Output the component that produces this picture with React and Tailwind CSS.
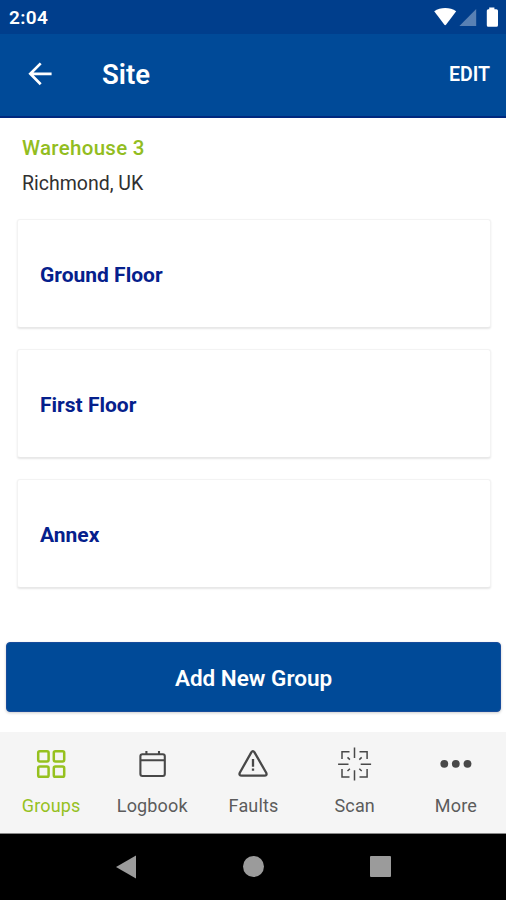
import React from 'react';

const groups = ['Ground Floor', 'First Floor', 'Annex'];

const GroupsIcon = () => (
  <svg className="h-9 w-9" viewBox="0 0 36 36" fill="none" stroke="currentColor" strokeWidth="2.5">
    <rect x="5.2" y="5.2" width="10.4" height="10.2" rx="1.6" />
    <rect x="20.8" y="5.2" width="10.4" height="10.2" rx="1.6" />
    <rect x="5.2" y="20.6" width="10.4" height="10.2" rx="1.6" />
    <rect x="20.8" y="20.6" width="10.4" height="10.2" rx="1.6" />
  </svg>
);

const LogbookIcon = () => (
  <svg className="h-9 w-9" viewBox="0 0 36 36" fill="none" stroke="currentColor" strokeWidth="2.1">
    <rect x="6.4" y="8.2" width="24.4" height="21.8" rx="2" />
    <path d="M6.4 14.2H30.8M12.4 5V8M25 5V8" />
  </svg>
);

const FaultsIcon = () => (
  <svg className="h-9 w-9" viewBox="0 0 36 36" fill="none" stroke="currentColor" strokeWidth="2.3" strokeLinejoin="round">
    <path d="M16.3 6.4Q17.9 4 19.5 6.4L31.2 26.7Q32.4 29.7 29.4 29.7H6.8Q3.6 29.7 4.8 26.7Z" />
    <path d="M18 13V20.8M18 22.4V24.7" />
  </svg>
);

const ScanIcon = () => (
  <svg className="h-9 w-9" viewBox="0 0 36 36" fill="none" stroke="currentColor" strokeWidth="1.5">
    <path d="M18.5 1.5V12M18.5 24.2V34.6M2.1 18.2H12.5M24.7 18.2H35.1" />
    <path d="M13.5 5.8H6V13M23.5 5.8H31.1V13M6 23V31H13.5M31.1 23V31H23.5" />
    <path d="M11.5 11.4L13.9 13.6M25.7 11.4L23.3 13.6M11.5 25L13.9 22.8M25.7 25L23.3 22.8" />
  </svg>
);

const MoreIcon = () => (
  <svg className="h-9 w-9" viewBox="0 0 36 36" fill="currentColor">
    <circle cx="7.3" cy="17.8" r="3.9" />
    <circle cx="18.8" cy="17.8" r="3.9" />
    <circle cx="30.5" cy="17.8" r="3.9" />
  </svg>
);

const tabs = [
  { name: 'Groups', icon: GroupsIcon },
  { name: 'Logbook', icon: LogbookIcon },
  { name: 'Faults', icon: FaultsIcon },
  { name: 'Scan', icon: ScanIcon },
  { name: 'More', icon: MoreIcon },
];

const StatusBar = () => (
  <div className="flex h-[34px] items-center justify-between bg-[#003e8c] pl-[9px] pr-[7px] text-white">
    <span className="pt-[3px] text-[19px] font-semibold tracking-[0.4px]">2:04</span>
    <svg className="h-[34px] w-[66px]" viewBox="0 0 66 34" fill="white">
      <path d="M1.2 11.2C7.5 6.9 17 6.9 23.2 11.2L13.2 24.6Q12.2 25.7 11.2 24.6Z" />
      <path d="M43.2 9V26H26.4Z" opacity="0.35" />
      <path d="M56.2 7.5H61.4V9.2H63.4Q65 9.2 65 10.8V25.2Q65 26.8 63.4 26.8H55.2Q53.8 26.8 53.8 25.2V10.8Q53.8 9.2 55.2 9.2H56.2Z" />
    </svg>
  </div>
);

const Header = () => (
  <header className="flex h-[84px] items-center border-b-2 border-[#00297f] bg-[#004a98] pl-[22px] pr-4 text-white">
    <button>
      <svg className="h-9 w-9" viewBox="0 0 36 36" fill="none" stroke="currentColor" strokeWidth="2.7">
        <path d="M29.6 16.8H8.5M18.7 6.4L8.3 16.8L18.7 27.2" />
      </svg>
    </button>
    <h1 className="ml-11 text-[27.5px] font-semibold">Site</h1>
    <button className="ml-auto text-[19.5px] font-semibold">EDIT</button>
  </header>
);

const App = () => {
  return (
    <div className="flex h-[900px] w-[506px] flex-col overflow-hidden bg-white font-['Roboto',sans-serif]">
      <StatusBar />
      <Header />

      <main className="flex flex-1 flex-col">
        <div className="pl-[22px] pt-[14px]">
          <h2 className="text-[20.5px] leading-8 font-medium tracking-[0.3px] text-[#92bd21]">Warehouse 3</h2>
          <p className="pt-1 text-[19.5px] leading-8 text-[#303030]">Richmond, UK</p>
        </div>

        <div className="mt-[19px] flex flex-col gap-[21px] pl-[17px] pr-[15px]">
          {groups.map((group) => (
            <div
              key={group}
              className="flex h-[109px] items-center rounded-[3px] border border-[#f3f3f3] border-b-[#e8e8e8] bg-white pl-[22px] shadow-[0_1px_2px_rgba(0,0,0,0.1)]"
            >
              <span className="pt-1 text-[21px] font-bold text-[#05208c]">{group}</span>
            </div>
          ))}
        </div>

        <button className="mt-auto mr-[5px] mb-5 ml-[6px] h-[70px] rounded-sm border border-[#174c9c] bg-[#004a98] pt-[3px] text-[22.5px] font-semibold text-white shadow-[0_1px_3px_rgba(0,0,0,0.2)]">
          Add New Group
        </button>
      </main>

      {/* Bottom tabs */}
      <nav className="grid h-[102px] grid-cols-5 border-b border-[#888] bg-[#f5f5f5]">
        {tabs.map(({ name, icon: Icon }) => (
          <button
            key={name}
            className={`flex flex-col items-center pt-[14px] ${name === 'Groups' ? 'text-[#96c11f]' : 'text-[#484848]'}`}
          >
            <Icon />
            <span
              className={`mt-3 pl-px text-[18px] leading-6 tracking-[0.15px] ${name === 'Groups' ? '' : 'text-[#5c5c5c]'}`}
            >
              {name}
            </span>
          </button>
        ))}
      </nav>

      {/* System navigation */}
      <div className="flex h-[66px] items-center justify-center gap-[106px] bg-black pb-px text-[#9b9b9b]">
        <svg className="h-6 w-[21px]" viewBox="0 0 21 24" fill="currentColor">
          <path d="M0 12L20 0.5V23.5Z" />
        </svg>
        <div className="h-[21px] w-[21px] rounded-full bg-[#9b9b9b]" />
        <div className="h-[21px] w-[21px] rounded-[1px] bg-[#9b9b9b]" />
      </div>
    </div>
  );
};

export default App;
